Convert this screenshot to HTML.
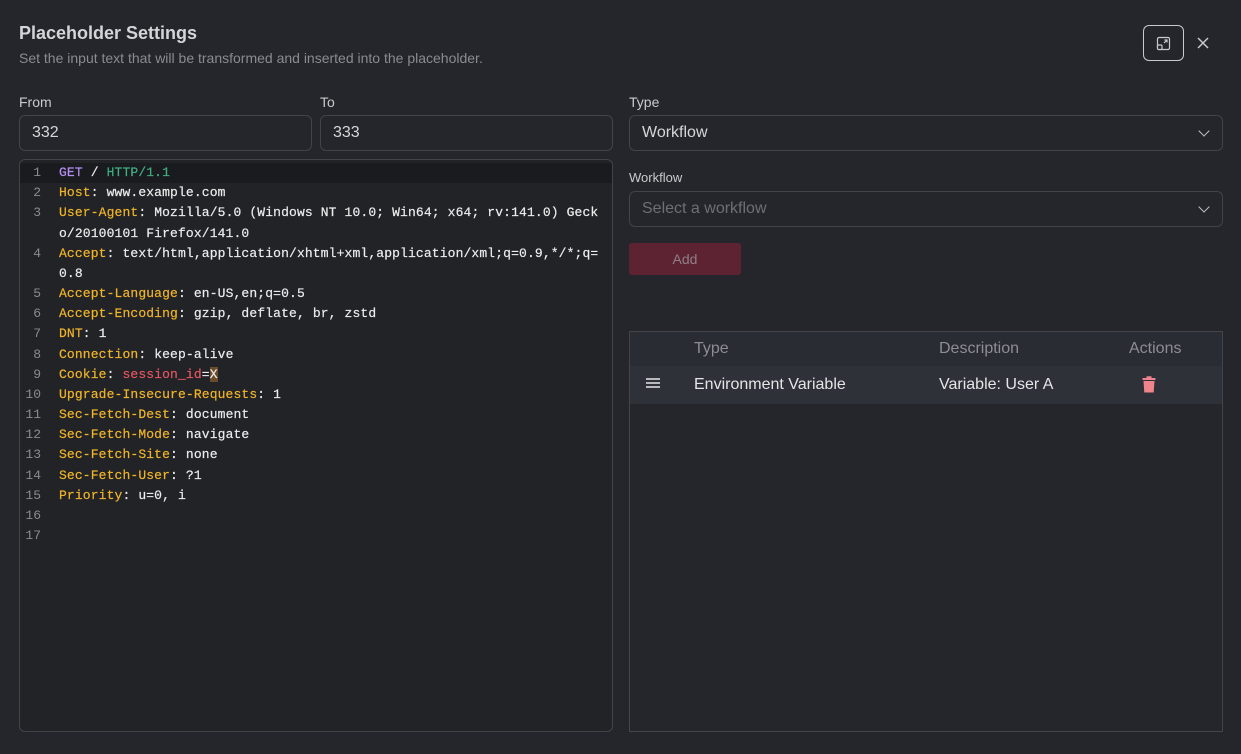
<!DOCTYPE html>
<html><head><style>
*{box-sizing:border-box;margin:0;padding:0}
body{width:1241px;height:754px;background:#25262b;font-family:"Liberation Sans",sans-serif;position:relative;overflow:hidden;color:#c1c2c5}
.a{position:absolute}
.lbl{font-size:14px;color:#c9cacd}
.inp{border:1px solid #424348;border-radius:6px;background:#25262b;font-size:16px;color:#d6d7da;padding-left:12px;display:flex;align-items:center}
.ed{left:19px;top:159px;width:594px;height:573px;border:1px solid #424348;border-radius:6px;background:#222327;font-family:"Liberation Mono",monospace;font-size:13px;overflow:hidden}
.row{position:absolute;left:0;width:592px;height:20.17px;line-height:20.17px;white-space:pre;color:#ececec}
.row .n{position:absolute;right:571px;color:#8a8b8f}
.row .c{position:absolute;left:39px;letter-spacing:0.13px;-webkit-text-stroke:0.2px currentColor}
.k{color:#f0b429}.v{color:#b48ef0}.g{color:#3fae80}.r{color:#e05561}
.chev{position:absolute;right:14px;top:11px;width:8px;height:8px;border-right:1.5px solid #c1c2c5;border-bottom:1.5px solid #c1c2c5;transform:rotate(45deg)}
</style></head><body>
<div class="a" style="left:19px;top:23px;font-size:18px;font-weight:bold;color:#d4d5d8">Placeholder Settings</div>
<div class="a" style="left:19px;top:50px;font-size:14px;color:#8a8b90">Set the input text that will be transformed and inserted into the placeholder.</div>
<div class="a" style="left:1143px;top:25px;width:41px;height:36px;border:1px solid #c9cacd;border-radius:6px">
<svg class="a" style="left:12px;top:10px" width="16" height="16" viewBox="0 0 16 16" fill="none" stroke="#c9cacd" stroke-width="1.2"><rect x="1.5" y="1.5" width="12" height="12" rx="1.5"/><rect x="1.5" y="9" width="4.5" height="4.5" rx="1" fill="#25262b"/><path d="M8 7L11 4M8.5 4H11V6.5"/></svg></div>
<svg class="a" style="left:1196px;top:36px" width="14" height="14" viewBox="0 0 14 14" stroke="#c9cacd" stroke-width="1.5"><path d="M2 2L12 12M12 2L2 12"/></svg>
<div class="a lbl" style="left:19px;top:94px">From</div>
<div class="a lbl" style="left:320px;top:94px">To</div>
<div class="a inp" style="left:19px;top:115px;width:293px;height:36px">332</div>
<div class="a inp" style="left:320px;top:115px;width:293px;height:36px">333</div>
<div class="a ed">
<div class="row" style="top:3px;background:#1a1b1f"><span class="n">1</span><span class="c"><span class="v">GET</span> / <span class="g">HTTP/1.1</span></span></div>
<div class="row" style="top:23.2px"><span class="n">2</span><span class="c"><span class="k">Host</span>: www.example.com</span></div>
<div class="row" style="top:43.3px"><span class="n">3</span><span class="c"><span class="k">User-Agent</span>: Mozilla/5.0 (Windows NT 10.0; Win64; x64; rv:141.0) Geck</span></div>
<div class="row" style="top:63.5px"><span class="c">o/20100101 Firefox/141.0</span></div>
<div class="row" style="top:83.7px"><span class="n">4</span><span class="c"><span class="k">Accept</span>: text/html,application/xhtml+xml,application/xml;q=0.9,*/*;q=</span></div>
<div class="row" style="top:103.8px"><span class="c">0.8</span></div>
<div class="row" style="top:124px"><span class="n">5</span><span class="c"><span class="k">Accept-Language</span>: en-US,en;q=0.5</span></div>
<div class="row" style="top:144.2px"><span class="n">6</span><span class="c"><span class="k">Accept-Encoding</span>: gzip, deflate, br, zstd</span></div>
<div class="row" style="top:164.4px"><span class="n">7</span><span class="c"><span class="k">DNT</span>: 1</span></div>
<div class="row" style="top:184.5px"><span class="n">8</span><span class="c"><span class="k">Connection</span>: keep-alive</span></div>
<div class="row" style="top:204.7px"><span class="n">9</span><span class="c"><span class="k">Cookie</span>: <span class="r">session_id</span>=<span style="background:#6b4a2a">X</span></span></div>
<div class="row" style="top:224.9px"><span class="n">10</span><span class="c"><span class="k">Upgrade-Insecure-Requests</span>: 1</span></div>
<div class="row" style="top:245px"><span class="n">11</span><span class="c"><span class="k">Sec-Fetch-Dest</span>: document</span></div>
<div class="row" style="top:265.2px"><span class="n">12</span><span class="c"><span class="k">Sec-Fetch-Mode</span>: navigate</span></div>
<div class="row" style="top:285.4px"><span class="n">13</span><span class="c"><span class="k">Sec-Fetch-Site</span>: none</span></div>
<div class="row" style="top:305.5px"><span class="n">14</span><span class="c"><span class="k">Sec-Fetch-User</span>: ?1</span></div>
<div class="row" style="top:325.7px"><span class="n">15</span><span class="c"><span class="k">Priority</span>: u=0, i</span></div>
<div class="row" style="top:345.9px"><span class="n">16</span></div>
<div class="row" style="top:366px"><span class="n">17</span></div>
</div>
<div class="a lbl" style="left:629px;top:94px">Type</div>
<div class="a inp" style="left:629px;top:115px;width:594px;height:36px">Workflow<span class="chev"></span></div>
<div class="a" style="left:629px;top:170px;font-size:13px;color:#c9cacd">Workflow</div>
<div class="a inp" style="left:629px;top:191px;width:594px;height:36px;color:#6e6f74">Select a workflow<span class="chev"></span></div>
<div class="a" style="left:629px;top:243px;width:112px;height:32px;background:#5e2333;border-radius:3px;color:#8f7f86;font-size:14px;text-align:center;line-height:32px">Add</div>
<div class="a" style="left:629px;top:331px;width:594px;height:401px;border:1px solid #44454a;background:#25262b">
<div class="a" style="left:0;top:0;width:592px;height:34px;background:#2a2c33"></div>
<div class="a" style="left:0;top:34px;width:592px;height:38px;background:#2f3139"></div>
<div class="a" style="left:64px;top:8px;font-size:16px;color:#8d8e93">Type</div>
<div class="a" style="left:309px;top:8px;font-size:16px;color:#8d8e93">Description</div>
<div class="a" style="left:499px;top:8px;font-size:16px;color:#8d8e93">Actions</div>
<div class="a" style="left:16px;top:46px;width:14px;height:2px;background:#b8b9bd;box-shadow:0 4px 0 #b8b9bd,0 8px 0 #b8b9bd"></div>
<div class="a" style="left:64px;top:44px;font-size:16px;color:#e4e5e7">Environment Variable</div>
<div class="a" style="left:309px;top:44px;font-size:16px;color:#e4e5e7">Variable: User A</div>
<svg class="a" style="left:512px;top:44px" width="14" height="17" viewBox="0 0 14 17" fill="#f0848c"><rect x="0.5" y="2" width="13" height="2" rx="0.5"/><rect x="4.5" y="0.3" width="5" height="2"/><path d="M1.5 5H12.5L11.7 16.5H2.3Z"/></svg>
</div>
</body></html>
